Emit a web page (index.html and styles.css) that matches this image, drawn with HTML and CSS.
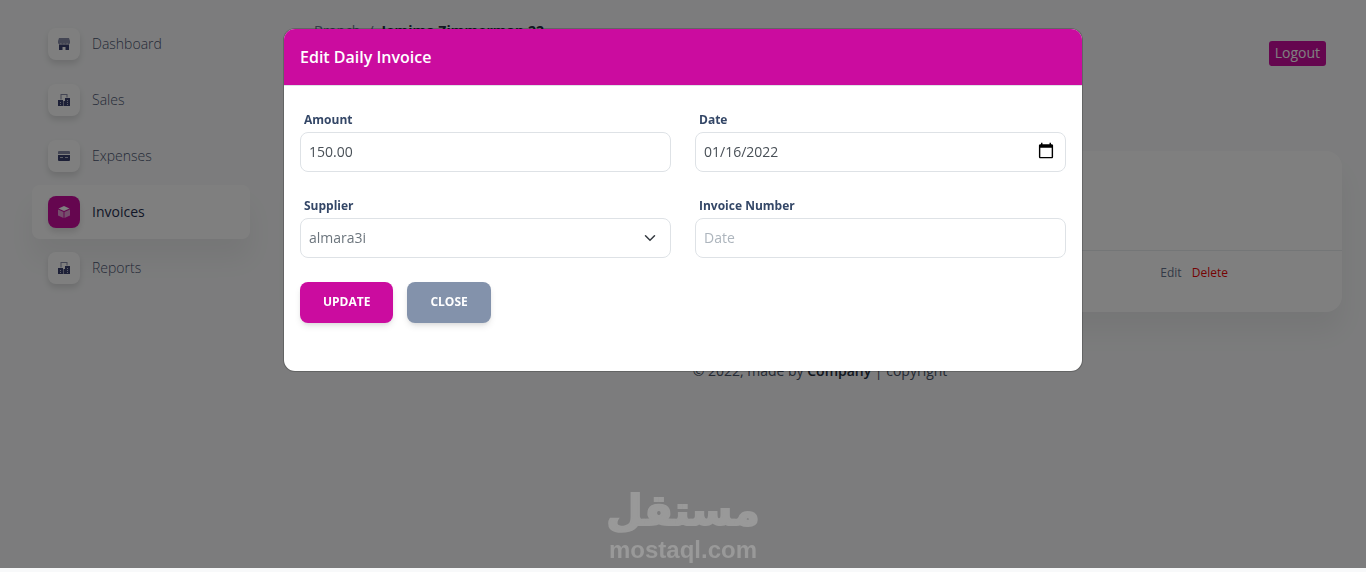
FILE: index.html
```html
<!DOCTYPE html>
<html lang="en">
<head>
<meta charset="UTF-8">
<meta name="viewport" content="width=device-width, initial-scale=1.0">
<title>Invoices</title>
<link rel="stylesheet" href="styles.css">
</head>
<body>

<svg width="0" height="0" class="icon-defs" aria-hidden="true">
    <symbol id="icon-shop" viewBox="0 0 12 12">
        <path class="icon-soft" d="M1 0h10l1 3v1.500a1.500 1.500 0 0 1-3 .3 1.500 1.500 0 0 1-3 0 1.500 1.500 0 0 1-3 0A1.500 1.500 0 0 1 0 4.500V3z"/>
        <path d="M1 6.500h10V12H7.500V9h-3v3H1z"/>
    </symbol>
    <symbol id="icon-office" viewBox="0 0 12 12">
        <path class="icon-soft" d="M2.500 0h7v3.500h-1V1h-5v4.500h-1z"/>
        <path d="M0 6h5v6H0zM5.500 7H7V4h5v8H5.500z"/>
        <path class="icon-hole" d="M2 8h1v1H2zM2 10h1v1H2zM9 6h1v1H9zM9 8h1v1H9zM9 10h1v1H9z"/>
    </symbol>
    <symbol id="icon-card" viewBox="0 0 12 12">
        <path class="icon-soft" d="M0 4V2a1 1 0 0 1 1-1h10a1 1 0 0 1 1 1v2z"/>
        <path d="M0 5h12v5a1 1 0 0 1-1 1H1a1 1 0 0 1-1-1z"/>
        <path class="icon-hole" d="M2 7h3v1H2zM7 7h3v1H7z"/>
    </symbol>
    <symbol id="icon-box" viewBox="0 0 12 12">
        <path d="M6 0l5.500 2.500L6 5 .5 2.500z"/>
        <path class="icon-soft" d="M0 3.500l5.500 2.500v6L0 9.500zM12 3.500L6.500 6v6L12 9.500z"/>
    </symbol>
</svg>

<div class="layout">
    <aside class="sidebar">
        <nav class="nav">
            <a href="#" class="nav-link">
                <span class="nav-icon"><svg><use href="#icon-shop"/></svg></span>
                <span>Dashboard</span>
            </a>
            <a href="#" class="nav-link">
                <span class="nav-icon"><svg><use href="#icon-office"/></svg></span>
                <span>Sales</span>
            </a>
            <a href="#" class="nav-link">
                <span class="nav-icon"><svg><use href="#icon-card"/></svg></span>
                <span>Expenses</span>
            </a>
            <a href="#" class="nav-link active">
                <span class="nav-icon"><svg><use href="#icon-box"/></svg></span>
                <span>Invoices</span>
            </a>
            <a href="#" class="nav-link">
                <span class="nav-icon"><svg><use href="#icon-office"/></svg></span>
                <span>Reports</span>
            </a>
        </nav>
    </aside>

    <main class="main">
        <header class="topbar">
            <div class="breadcrumb">
                <a href="#">Branch</a>
                <span class="separator">/</span>
                <strong>Jemima Zimmerman 22</strong>
            </div>
            <button type="button" class="logout">Logout</button>
        </header>

        <section class="card">
            <table class="invoices">
                <tr>
                    <td>
                        <a href="#">Edit</a>
                        <a href="#" class="delete">Delete</a>
                    </td>
                </tr>
            </table>
        </section>

        <footer class="footer">© 2022, made by <strong>Company</strong> | copyright</footer>
    </main>
</div>

<div class="backdrop"></div>

<div class="modal" role="dialog" aria-labelledby="modalTitle">
    <div class="modal-header">
        <h5 id="modalTitle">Edit Daily Invoice</h5>
    </div>
    <form class="modal-body">
        <div class="form-grid">
            <div class="field">
                <label for="amount">Amount</label>
                <input type="text" id="amount" value="150.00">
            </div>
            <div class="field">
                <label for="date">Date</label>
                <input type="date" id="date" value="2022-01-16">
            </div>
            <div class="field">
                <label for="supplier">Supplier</label>
                <div class="select-wrap">
                    <select id="supplier">
                        <option>almara3i</option>
                    </select>
                    <svg class="chevron" viewBox="0 0 16 16"><path d="M2 5l6 6 6-6"/></svg>
                </div>
            </div>
            <div class="field">
                <label for="number">Invoice Number</label>
                <input type="text" id="number" placeholder="Date">
            </div>
        </div>
        <div class="actions">
            <button type="button" class="btn btn-primary">Update</button>
            <button type="button" class="btn btn-secondary">Close</button>
        </div>
    </form>
</div>

<div class="watermark">
    <span class="watermark-ar" lang="ar" dir="rtl">مستقل</span>
    <span class="watermark-en">mostaql.com</span>
</div>

</body>
</html>
```

FILE: styles.css
```css
* {
    box-sizing: border-box;
}

body {
    margin: 0;
    background-color: #f8f9fa;
    color: #67748e;
    font-family: "Open Sans", sans-serif;
    font-size: 14px;
    line-height: 20px;
}

a {
    color: inherit;
    text-decoration: none;
}

button, input, select {
    font-family: inherit;
}

.icon-defs {
    position: absolute;
}

.layout {
    display: flex;
    min-height: 100vh;
}

/* sidebar */
.sidebar {
    width: 274px;
    flex: none;
    padding: 17px 24px 0 32px;
}

.nav {
    display: flex;
    flex-direction: column;
    gap: 2px;
}

.nav-link {
    display: flex;
    align-items: center;
    gap: 12px;
    height: 54px;
    padding: 0 16px;
    border-radius: 8px;
    color: #4a5470;
    font-weight: 300;
}

.nav-link.active {
    background-color: #fff;
    color: #252f50;
    font-weight: 400;
    box-shadow: 0 20px 27px 0 rgba(0, 0, 0, 0.05);
}

.nav-icon {
    display: flex;
    align-items: center;
    justify-content: center;
    width: 32px;
    height: 32px;
    border-radius: 8px;
    background-color: #fff;
    color: #3a416f;
    box-shadow: 0 4px 6px rgba(0, 0, 0, 0.12);
}

.nav-icon svg {
    width: 12px;
    height: 12px;
    fill: currentColor;
}

.icon-soft {
    opacity: 0.6;
}

.icon-hole {
    fill: #b8bccf;
}

.active .nav-icon {
    background-color: #cb0c9f;
    color: #fff;
}

/* content */
.main {
    flex: 1;
    padding: 20px 24px 0;
}

.topbar {
    display: flex;
    justify-content: space-between;
    align-items: flex-start;
    height: 131px;
    padding: 0 16px;
}

.breadcrumb {
    display: flex;
    gap: 8px;
    line-height: 22px;
}

.breadcrumb strong {
    color: #252f40;
}

.logout {
    margin-top: 21px;
    padding: 1px 6px 3px;
    border: 0;
    border-radius: 3px;
    background-color: #cb0c9f;
    color: #fff;
    font-size: 14px;
    line-height: 21px;
}

.card {
    padding: 99px 0 16px;
    border-radius: 16px;
    background-color: #fff;
    box-shadow: 0 20px 27px 0 rgba(0, 0, 0, 0.05);
}

.invoices {
    width: 100%;
    border-collapse: collapse;
    font-size: 12px;
}

.invoices td {
    height: 45px;
    padding: 0 114px;
    border-top: 1px solid #e9ecef;
    text-align: right;
}

.invoices .delete {
    margin-left: 7px;
    color: #ea0606;
}

.footer {
    padding-top: 49px;
    color: #4a5468;
    text-align: center;
}

.footer strong {
    color: #252f40;
    font-weight: 600;
}

/* modal */
.backdrop {
    position: fixed;
    top: 0;
    right: 0;
    bottom: 4px;
    left: 0;
    background-color: rgba(0, 0, 0, 0.5);
}

.modal {
    position: fixed;
    top: 28px;
    right: 0;
    left: 0;
    max-width: 800px;
    margin: 0 auto;
    border: 1px solid rgba(0, 0, 0, 0.2);
    border-radius: 12px;
    background-color: #fff;
    background-clip: padding-box;
    overflow: hidden;
}

.modal-header {
    padding: 16px;
    border-bottom: 1px solid #dee2e6;
    background-color: #cb0c9f;
    background-clip: padding-box;
}

.modal-header h5 {
    margin: 0;
    color: #fff;
    font-size: 16px;
    font-weight: 600;
    line-height: 24px;
}

.modal-body {
    padding: 24px 16px 48px;
}

.form-grid {
    display: grid;
    grid-template-columns: 1fr 1fr;
    gap: 24px;
}

.field label {
    display: block;
    margin: 0 0 2px 4px;
    color: #344767;
    font-size: 12px;
    font-weight: 700;
    line-height: 20px;
}

.field input,
.field select {
    display: block;
    width: 100%;
    height: 40px;
    padding: 0 8px 2px;
    border: 1px solid #dee2e6;
    border-radius: 8px;
    background-color: #fff;
    color: #495057;
    font-size: 14px;
}

.field input::placeholder {
    color: #adb5bd;
}

.field input::-webkit-datetime-edit-fields-wrapper,
.field input::-webkit-datetime-edit-month-field,
.field input::-webkit-datetime-edit-day-field,
.field input::-webkit-datetime-edit-year-field {
    padding: 0;
}

.field input::-webkit-calendar-picker-indicator {
    width: 18px;
    height: 18px;
}

.select-wrap {
    position: relative;
}

.field select {
    appearance: none;
    color: #6c757d;
}

.chevron {
    position: absolute;
    top: 14px;
    right: 15px;
    width: 12px;
    height: 12px;
    fill: none;
    stroke: #343a40;
    stroke-width: 2;
    stroke-linecap: round;
    pointer-events: none;
}

.actions {
    display: flex;
    gap: 14px;
    margin-top: 24px;
}

.btn {
    padding: 11px 23px 13px;
    border: 0;
    border-radius: 8px;
    color: #fff;
    font-size: 12px;
    font-weight: 700;
    line-height: 17px;
    text-transform: uppercase;
    box-shadow: 0 4px 7px -1px rgba(0, 0, 0, 0.11), 0 2px 4px -1px rgba(0, 0, 0, 0.07);
}

.btn-primary {
    background-color: #cb0c9f;
}

.btn-secondary {
    background-color: #8392ab;
}

.watermark {
    position: fixed;
    right: 0;
    bottom: 8px;
    left: 0;
    display: flex;
    flex-direction: column;
    align-items: center;
    color: #999;
    font-weight: 700;
    pointer-events: none;
}

.watermark-ar {
    font-family: "DejaVu Sans", sans-serif;
    font-size: 42px;
    line-height: 50px;
    -webkit-text-stroke: 2px #999;
}

.watermark-en {
    font-family: "Liberation Sans", sans-serif;
    font-size: 24px;
    line-height: 28px;
}
```
